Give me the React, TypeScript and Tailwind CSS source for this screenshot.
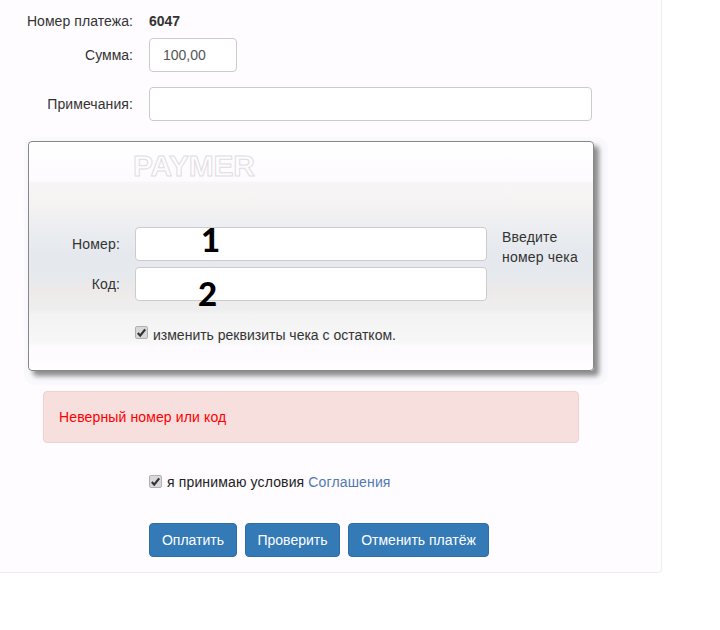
import type { ReactNode } from "react";

function Tick({ className = "" }: { className?: string }) {
  return (
    <span className={`flex h-[13px] w-[13px] shrink-0 items-center justify-center rounded-[2px] border border-[#b0b0b0] bg-[#d8d8d8] ${className}`}>
      <svg viewBox="0 0 12 12" className="h-[11px] w-[11px]" aria-hidden="true">
        <path d="M2 6.5 L4.6 9.4 L10 2.6" fill="none" stroke="#333" strokeWidth="2.4" />
      </svg>
    </span>
  );
}

function Btn({ width, children }: { width: string; children: ReactNode }) {
  return (
    <button
      type="button"
      className={`h-[34px] rounded-[4px] border border-[#2e6da4] bg-[#337ab7] text-center text-[14px] text-white ${width}`}
    >
      {children}
    </button>
  );
}

const field = "block h-[34px] rounded-[4px] border border-[#ccc] bg-white px-3 text-[14px] text-[#555] outline-none";

export default function App() {
  return (
    <div className="min-h-[630px] bg-white font-['Liberation_Sans',Arial,sans-serif] text-[14px] leading-5 text-[#333]">
      <div className="w-[662px] rounded-br-[4px] border-r border-b border-[#eeeeee] bg-[#fffcff] pt-[11px] pb-[15px]">
        <div className="flex gap-4">
          <div className="w-[133px] text-right tracking-[0.07px]">Номер платежа:</div>
          <div className="font-bold">6047</div>
        </div>

        <div className="mt-[7px] flex items-center gap-4">
          <label className="w-[133px] text-right">Сумма:</label>
          <input readOnly value="100,00" className={`${field} w-[88px] pl-[13px]`} />
        </div>

        <div className="mt-[15px] flex items-center gap-4">
          <label className="w-[133px] text-right tracking-[0.09px]">Примечания:</label>
          <input readOnly className={`${field} w-[443px]`} />
        </div>

        {/* Paymer box */}
        <div className="relative mt-5 ml-[28px] h-[230px] w-[566px] rounded-[4px] border border-[#888] bg-[linear-gradient(180deg,#ffffff_0,#fefcff_20px,#fdfbff_39px,#f6f6f6_40px,#f6f3f3_60px,#eceef1_85px,#e5e9ed_110px,#e6e9ed_135px,#eeeaea_150px,#eeeeee_168px,#f4f3f4_172px,#f7f7f7_200px,#fdfbff_205px,#fefcff_220px,#ffffff_228px)] pt-[11px] shadow-[5px_5px_5px_#8c8c8c,5px_5px_2px_9px_#f8f8fd]">
          <div className="ml-[104px] h-[26px] text-[30px] leading-[26px] font-bold tracking-[-0.3px] text-transparent [-webkit-text-stroke:1px_#dedede]">
            PAYMER
          </div>

          <div className="mt-[48px] flex gap-[15px]">
            <div className="flex flex-col gap-[6px]">
              <div className="flex items-center gap-[15px]">
                <label className="w-[91px] text-right tracking-[0.15px]">Номер:</label>
                <input readOnly className={`${field} w-[352px]`} />
              </div>
              <div className="flex items-center gap-[15px]">
                <label className="w-[91px] text-right tracking-[0.15px]">Код:</label>
                <input readOnly className={`${field} w-[352px]`} />
              </div>
            </div>
            <div className="w-[80px] tracking-[0.2px]">Введите номер чека</div>
          </div>

          <div className="mt-[24px] ml-[106px] flex items-center gap-[5px]">
            <Tick className="mb-[5px]" />
            <span>изменить реквизиты чека с остатком.</span>
          </div>

          {/* hand-written marks on top of the screenshot */}
          <span className="absolute top-[75px] left-[172px] font-['Lato',sans-serif] text-[33px] leading-[44px] font-black text-black">
            1
          </span>
          <span className="absolute top-[129px] left-[169px] font-['Lato',sans-serif] text-[33px] leading-[44px] font-black text-black">
            2
          </span>
        </div>

        <div className="mt-5 ml-[43px] w-[536px] rounded-[4px] border border-[#f0d0d2] bg-[#f7dfde] px-[15px] py-[15px] tracking-[0.13px] text-[#ff0000]">
          Неверный номер или код
        </div>

        <div className="mt-[28px] ml-[149px] flex h-5 items-center gap-[5px] text-[#222]">
          <Tick />
          <span className="pt-px tracking-[0.14px]">
            я принимаю условия <a className="text-[#4f79b3]">Соглашения</a>
          </span>
        </div>

        <div className="mt-[32px] ml-[149px] flex gap-2">
          <Btn width="w-[88px]">Оплатить</Btn>
          <Btn width="w-[95px]">Проверить</Btn>
          <Btn width="w-[141px]">Отменить платёж</Btn>
        </div>
      </div>
    </div>
  );
}
